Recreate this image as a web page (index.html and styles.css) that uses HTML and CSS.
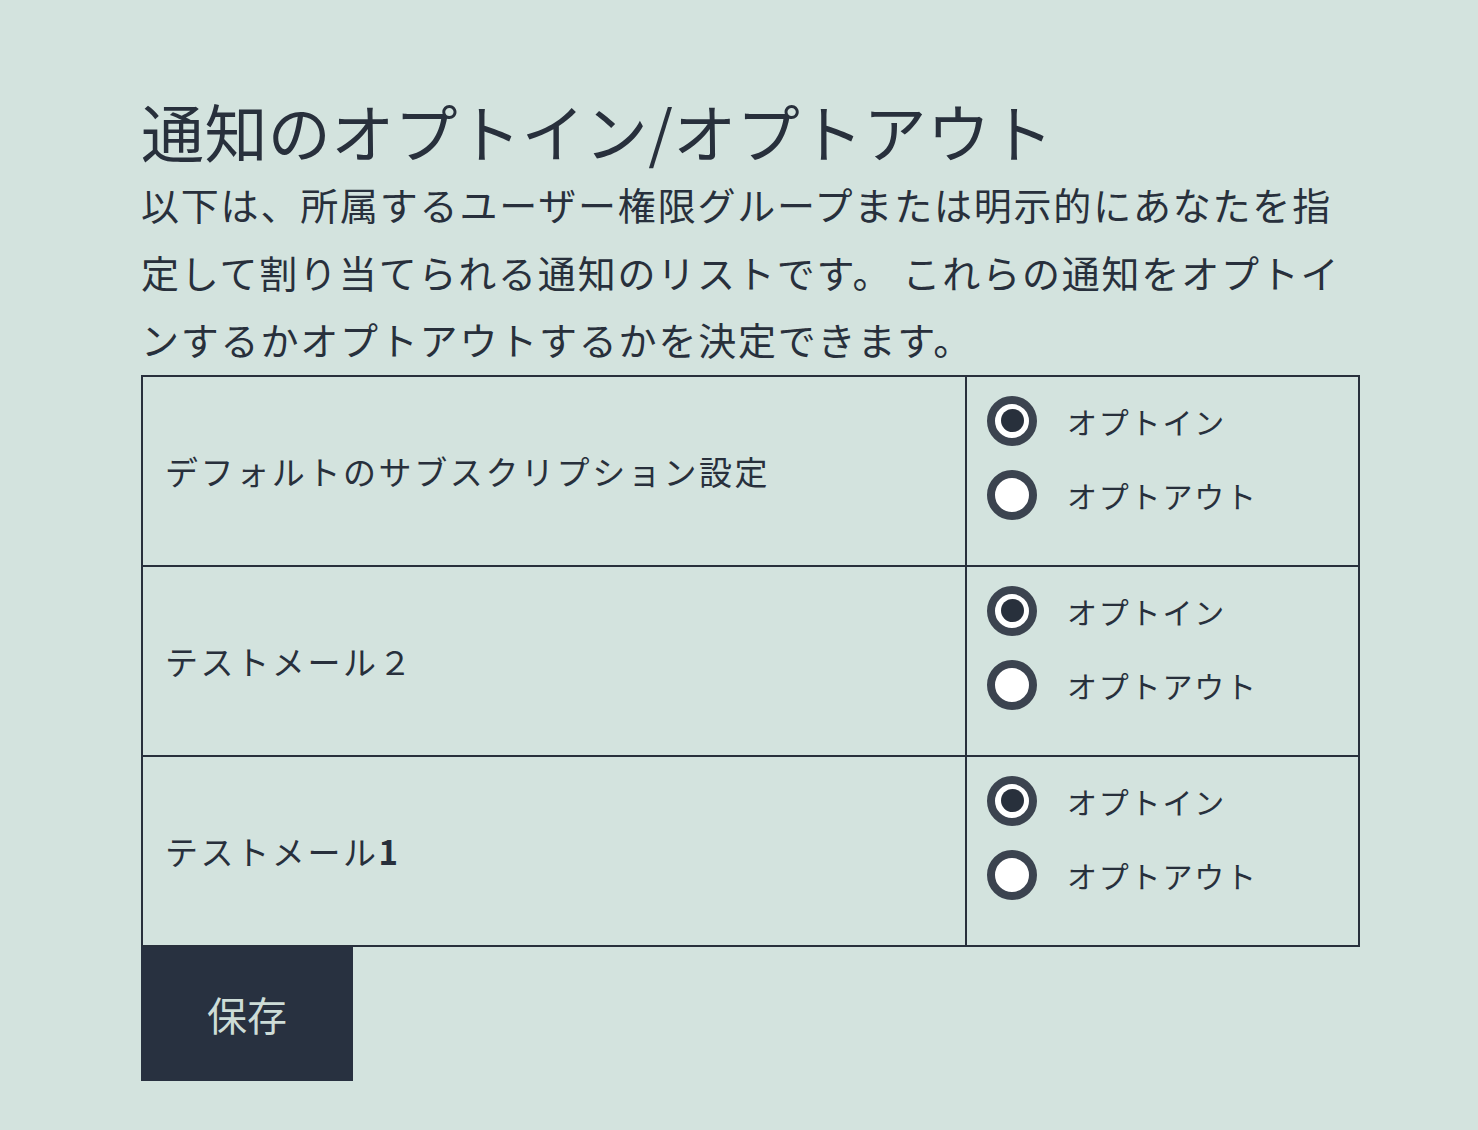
FILE: index.html
```html
<!DOCTYPE html>
<html lang="ja">
<head>
<meta charset="utf-8">
<title>通知のオプトイン/オプトアウト</title>
<link rel="stylesheet" href="styles.css">
</head>
<body>
<main class="page">
  <h1 class="title">通知のオプトイン/オプトアウト</h1>
  <p class="intro">以下は、所属するユーザー権限グループまたは明示的にあなたを指定して割り当てられる通知のリストです。 これらの通知をオプトインするかオプトアウトするかを決定できます。</p>
  <table class="subs">
    <tr>
      <td class="name">デフォルトのサブスクリプション設定</td>
      <td class="opts">
        <label class="opt"><input type="radio" name="r1" checked><span>オプトイン</span></label>
        <label class="opt"><input type="radio" name="r1"><span>オプトアウト</span></label>
      </td>
    </tr>
    <tr>
      <td class="name">テストメール２</td>
      <td class="opts">
        <label class="opt"><input type="radio" name="r2" checked><span>オプトイン</span></label>
        <label class="opt"><input type="radio" name="r2"><span>オプトアウト</span></label>
      </td>
    </tr>
    <tr>
      <td class="name">テストメール<span class="num">1</span></td>
      <td class="opts">
        <label class="opt"><input type="radio" name="r3" checked><span>オプトイン</span></label>
        <label class="opt"><input type="radio" name="r3"><span>オプトアウト</span></label>
      </td>
    </tr>
  </table>
  <button class="save" type="button">保存</button>
</main>
</body>
</html>
```

FILE: styles.css
```css
html, body {
  margin: 0;
  padding: 0;
  background: #d3e3de;
}
body {
  font-family: "Noto Sans CJK JP", "Noto Sans", sans-serif;
  color: #28303c;
}
.page {
  padding: 90px 0 0 141px;
  width: 1220px;
}
.title {
  margin: 0;
  font-size: 63px;
  font-weight: 400;
  line-height: 80px;
  letter-spacing: 0.4px;
}
.intro {
  margin: 0 0 2px 0;
  font-size: 38px;
  line-height: 67.5px;
  letter-spacing: 1.8px;
  font-weight: 400;
  padding-right: 20px;
}
.subs {
  border-collapse: collapse;
  width: 1219px;
  margin-top: 0;
}
.subs td {
  border: 2px solid #28303c;
  height: 190px;
  box-sizing: border-box;
}
.name {
  width: 824px;
  padding: 0 20px 0 22px;
  font-size: 33px;
  letter-spacing: 2.6px;
  vertical-align: middle;
}
.num {
  font-weight: 600;
}
.opts {
  vertical-align: top;
  padding: 19px 20px 0 20px;
}
.opt {
  display: flex;
  align-items: center;
  gap: 30px;
  height: 50px;
  margin-bottom: 24px;
  font-size: 30px;
  letter-spacing: 1.8px;
}
.opt input {
  appearance: none;
  -webkit-appearance: none;
  margin: 0;
  width: 50px;
  height: 50px;
  border-radius: 50%;
  border: 8px solid #3b434f;
  background: #ffffff;
  box-sizing: border-box;
  display: grid;
  place-items: center;
}
.opt input:checked::after {
  content: "";
  width: 23px;
  height: 23px;
  border-radius: 50%;
  background: #28303c;
}
.save {
  display: block;
  margin: 0;
  width: 212px;
  height: 134px;
  border: none;
  background: #283140;
  color: #cddcd7;
  font-family: "Noto Sans CJK JP", sans-serif;
  font-size: 40px;
  letter-spacing: 0;
}
```
